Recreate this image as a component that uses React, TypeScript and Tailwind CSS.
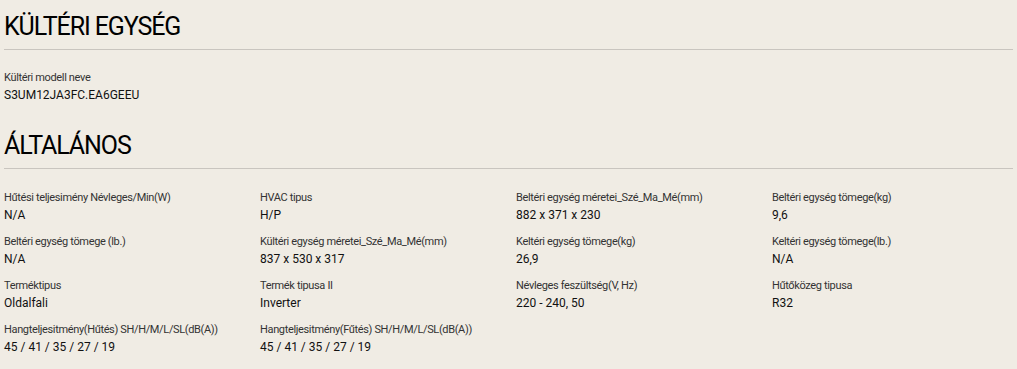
const specs = [
  { label: "Hűtési teljesimény Névleges/Min(W)", value: "N/A" },
  { label: "HVAC tipus", value: "H/P" },
  { label: "Beltéri egység méretei_Szé_Ma_Mé(mm)", value: "882 x 371 x 230" },
  { label: "Beltéri egység tömege(kg)", value: "9,6" },
  { label: "Beltéri egység tömege (lb.)", value: "N/A" },
  { label: "Kültéri egység méretei_Szé_Ma_Mé(mm)", value: "837 x 530 x 317" },
  { label: "Keltéri egység tömege(kg)", value: "26,9" },
  { label: "Keltéri egység tömege(lb.)", value: "N/A" },
  { label: "Terméktipus", value: "Oldalfali" },
  { label: "Termék tipusa II", value: "Inverter" },
  { label: "Névleges feszültség(V, Hz)", value: "220 - 240, 50" },
  { label: "Hűtőközeg tipusa", value: "R32" },
  { label: "Hangteljesitmény(Hűtés) SH/H/M/L/SL(dB(A))", value: "45 / 41 / 35 / 27 / 19" },
  { label: "Hangteljesitmény(Fűtés) SH/H/M/L/SL(dB(A))", value: "45 / 41 / 35 / 27 / 19" },
];

function SectionTitle({ children }: { children: string }) {
  return (
    <h2 className="pt-[11px] pb-[6px] border-b border-[#c9c5bf] text-[25px] leading-[32px] tracking-[-1.1px] text-black font-normal">
      {children}
    </h2>
  );
}

function Spec({ label, value }: { label: string; value: string }) {
  return (
    <div className="flex flex-col">
      <span className="text-[11px] leading-[16px] tracking-[-0.35px] text-[#333]">{label}</span>
      <span className="text-[12px] leading-[18px] text-[#111] font-normal">{value}</span>
    </div>
  );
}

export default function App() {
  return (
    <div className="min-h-[369px] w-full bg-[#f0ece4] px-[4px] font-['Roboto',sans-serif]">
      <section>
        <SectionTitle>KÜLTÉRI EGYSÉG</SectionTitle>
        <div className="pt-[20px]">
          <Spec label="Kültéri modell neve" value="S3UM12JA3FC.EA6GEEU" />
        </div>
      </section>

      <section className="pt-[15px]">
        <SectionTitle>ÁLTALÁNOS</SectionTitle>
        <div className="grid grid-cols-[256px_256px_256px_1fr] gap-y-[10px] pt-[21px]">
          {specs.map((s) => (
            <Spec key={s.label} label={s.label} value={s.value} />
          ))}
        </div>
      </section>
    </div>
  );
}
